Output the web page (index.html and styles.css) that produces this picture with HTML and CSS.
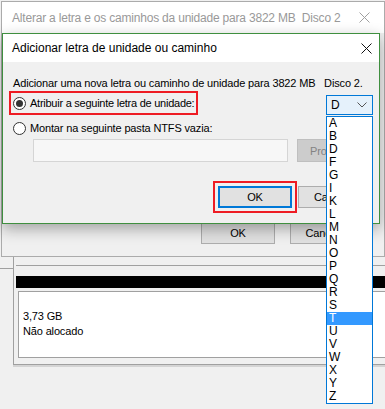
FILE: index.html
```html
<!DOCTYPE html>
<html lang="pt">
<head>
	<meta charset="UTF-8">
	<title>Adicionar letra de unidade ou caminho</title>
	<link rel="stylesheet" href="styles.css">
</head>
<body>
	<div class="desk">
		<!-- janela do Gerenciamento de Disco, atrás -->
		<div class="side"></div>
		<div class="disk">
			<div class="part">
				<div class="bar"></div>
				<div class="cell">
					<p>3,73 GB</p>
					<p>Não alocado</p>
				</div>
			</div>
		</div>
		<div class="navy"></div>

		<!-- diálogo de trás -->
		<div class="win outer">
			<div class="titlebar">
				<span class="title">Alterar a letra e os caminhos da unidade para 3822 MB&nbsp; Disco 2</span>
				<span class="close">
					<svg width="11" height="11" viewBox="0 0 11 11"><path d="M0.5 0.5L10.5 10.5M10.5 0.5L0.5 10.5" stroke="#a0a0a0" stroke-width="1"/></svg>
				</span>
			</div>
			<div class="outer-body">
				<div class="btns">
					<span class="btn">OK</span>
					<span class="btn">Cancelar</span>
				</div>
			</div>
		</div>

		<!-- diálogo ativo -->
		<div class="win inner">
			<div class="titlebar">
				<span class="title">Adicionar letra de unidade ou caminho</span>
				<span class="close">
					<svg width="11" height="11" viewBox="0 0 11 11"><path d="M0.5 0.5L10.5 10.5M10.5 0.5L0.5 10.5" stroke="#111" stroke-width="1"/></svg>
				</span>
			</div>
			<div class="inner-body">
				<p class="intro">Adicionar uma nova letra ou caminho de unidade para 3822 MB&nbsp;&nbsp; Disco 2.</p>
				<div class="row row-one">
					<label class="mark">
						<span class="radio on"></span>
						<span>Atribuir a seguinte letra de unidade:</span>
					</label>
					<div class="select">
						<span>D</span>
						<svg width="10" height="6" viewBox="0 0 10 6"><path d="M0.5 0.5L5 5L9.5 0.5" fill="none" stroke="#555" stroke-width="1"/></svg>
					</div>
				</div>
				<label class="row row-two">
					<span class="radio"></span>
					<span>Montar na seguinte pasta NTFS vazia:</span>
				</label>
				<div class="row row-path">
					<span class="field"></span>
					<span class="btn off">Procurar...</span>
				</div>
				<div class="row row-btns">
					<span class="mark mark-ok"><span class="btn default">OK</span></span>
					<span class="btn">Cancelar</span>
				</div>
			</div>
		</div>

		<ul class="droplist">
			<li>A</li>
			<li>B</li>
			<li>D</li>
			<li>F</li>
			<li>G</li>
			<li>I</li>
			<li>K</li>
			<li>L</li>
			<li>M</li>
			<li>N</li>
			<li>O</li>
			<li>P</li>
			<li>Q</li>
			<li>R</li>
			<li>S</li>
			<li class="sel">T</li>
			<li>U</li>
			<li>V</li>
			<li>W</li>
			<li>X</li>
			<li>Y</li>
			<li>Z</li>
		</ul>
	</div>
</body>
</html>
```

FILE: styles.css
```css
body{
	margin: 0;
	background: #f0f0f0;
	font-family: "Liberation Sans", Arial, sans-serif;
	font-size: 11px;
	letter-spacing: -0.15px;
	color: #000;
}

p{
	margin: 0;
}

.desk{
	position: relative;
	width: 385px;
	height: 409px;
	overflow: hidden;
	white-space: nowrap;
}

/* fundo: painel do disco */
.side{
	position: absolute;
	left: 0;
	top: 250px;
	width: 13px;
	height: 18px;
	border-bottom: 1px solid #a0a0a0;
}

.disk{
	position: absolute;
	left: 13px;
	top: 250px;
	right: -2px;
	height: 114px;
	border-left: 1px solid #a0a0a0;
	border-bottom: 1px solid #a0a0a0;
	box-shadow: 0 2px 0 #d4d4d4;
}

.part{
	margin: 15px 0 0 2px;
	padding-top: 10px;
	border-top: 1px solid #a0a0a0;
}

.bar{
	height: 12px;
	background: #000;
}

.cell{
	margin: 3px 0 0 2px;
	height: 48px;
	padding: 17px 4px 0;
	background: #fff;
	border: 1px solid #a0a0a0;
	line-height: 15px;
}

.navy{
	position: absolute;
	left: 382px;
	top: 177px;
	width: 3px;
	height: 13px;
	background: #1c2a5a;
}

/* janelas */
.win{
	position: absolute;
	background: #f0f0f0;
}

.titlebar{
	display: flex;
	align-items: center;
	background: #fff;
	letter-spacing: 0;
}

.close{
	margin-left: auto;
	display: flex;
}

.outer{
	left: 1px;
	top: 1px;
	width: 382px;
	height: 254px;
	border: 1px solid #ababab;
}

.outer .titlebar{
	height: 31px;
	padding: 0 14px 0 10px;
	color: #999;
	font-size: 12px;
	letter-spacing: -0.2px;
}

.outer-body{
	padding-top: 189px;
}

.btns{
	display: flex;
	justify-content: flex-end;
	gap: 15px;
	padding-right: 20px;
}

.btns .btn{
	width: 72px;
}

.inner{
	left: 2px;
	top: 33px;
	width: 376px;
	height: 189px;
	border: 1px solid #3f8f3f;
	box-shadow: 0 5px 14px rgba(0,0,0,.32);
}

.inner .titlebar{
	height: 28px;
	padding: 0 7px 0 9px;
	font-size: 12px;
}

.inner-body{
	padding: 13px 6px 0 10px;
}

.intro{
	line-height: 16px;
}

.row{
	display: flex;
	align-items: center;
}

.row-one{
	justify-content: space-between;
	align-items: flex-end;
	margin-top: 0;
}

.mark{
	display: flex;
	align-items: center;
	border: 2px solid #ee1c24;
}

.row-one .mark{
	margin-left: -4px;
	height: 20px;
	padding: 0 2px;
	gap: 4px;
	letter-spacing: -0.25px;
}

.select{
	display: flex;
	align-items: center;
	justify-content: space-between;
	box-sizing: border-box;
	width: 47px;
	height: 20px;
	padding: 0 5px 0 4px;
	background: #e5f1fb;
	border: 1px solid #0078d7;
	font-size: 12px;
}

.row-two{
	margin-top: 5px;
	height: 16px;
	gap: 4px;
}

.radio{
	width: 11px;
	height: 11px;
	border: 1px solid #333;
	border-radius: 50%;
	background: #fff;
	position: relative;
}

.radio.on:after{
	content: "";
	position: absolute;
	left: 2px;
	top: 2px;
	width: 7px;
	height: 7px;
	border-radius: 50%;
	background: #333;
}

.row-path{
	margin: 3px 0 0 20px;
	gap: 9px;
}

.field{
	width: 253px;
	height: 21px;
	background: #f7f7f7;
	border: 1px solid #d5d5d5;
}

.btn{
	display: flex;
	align-items: center;
	justify-content: center;
	width: 73px;
	height: 20px;
	background: #e1e1e1;
	border: 1px solid #adadad;
}

.btn.off{
	height: 21px;
	background: #cccccc;
	border-color: #bfbfbf;
	color: #838383;
}

.row-btns{
	margin-top: 19px;
	justify-content: flex-end;
	gap: 1px;
}

.mark-ok{
	padding: 3px 3px;
}

.btn.default{
	width: 70px;
	height: 18px;
	border: 2px solid #0078d7;
}

/* lista aberta do combo */
.droplist{
	position: absolute;
	left: 326px;
	top: 116px;
	width: 45px;
	margin: 0;
	padding: 0;
	list-style: none;
	background: #fff;
	border: 1px solid #0078d7;
	font-size: 12px;
	letter-spacing: 0;
}

.droplist li{
	height: 13px;
	line-height: 13px;
	padding-left: 2px;
}

.droplist .sel{
	background: #3399ff;
	color: #fff;
}
```
